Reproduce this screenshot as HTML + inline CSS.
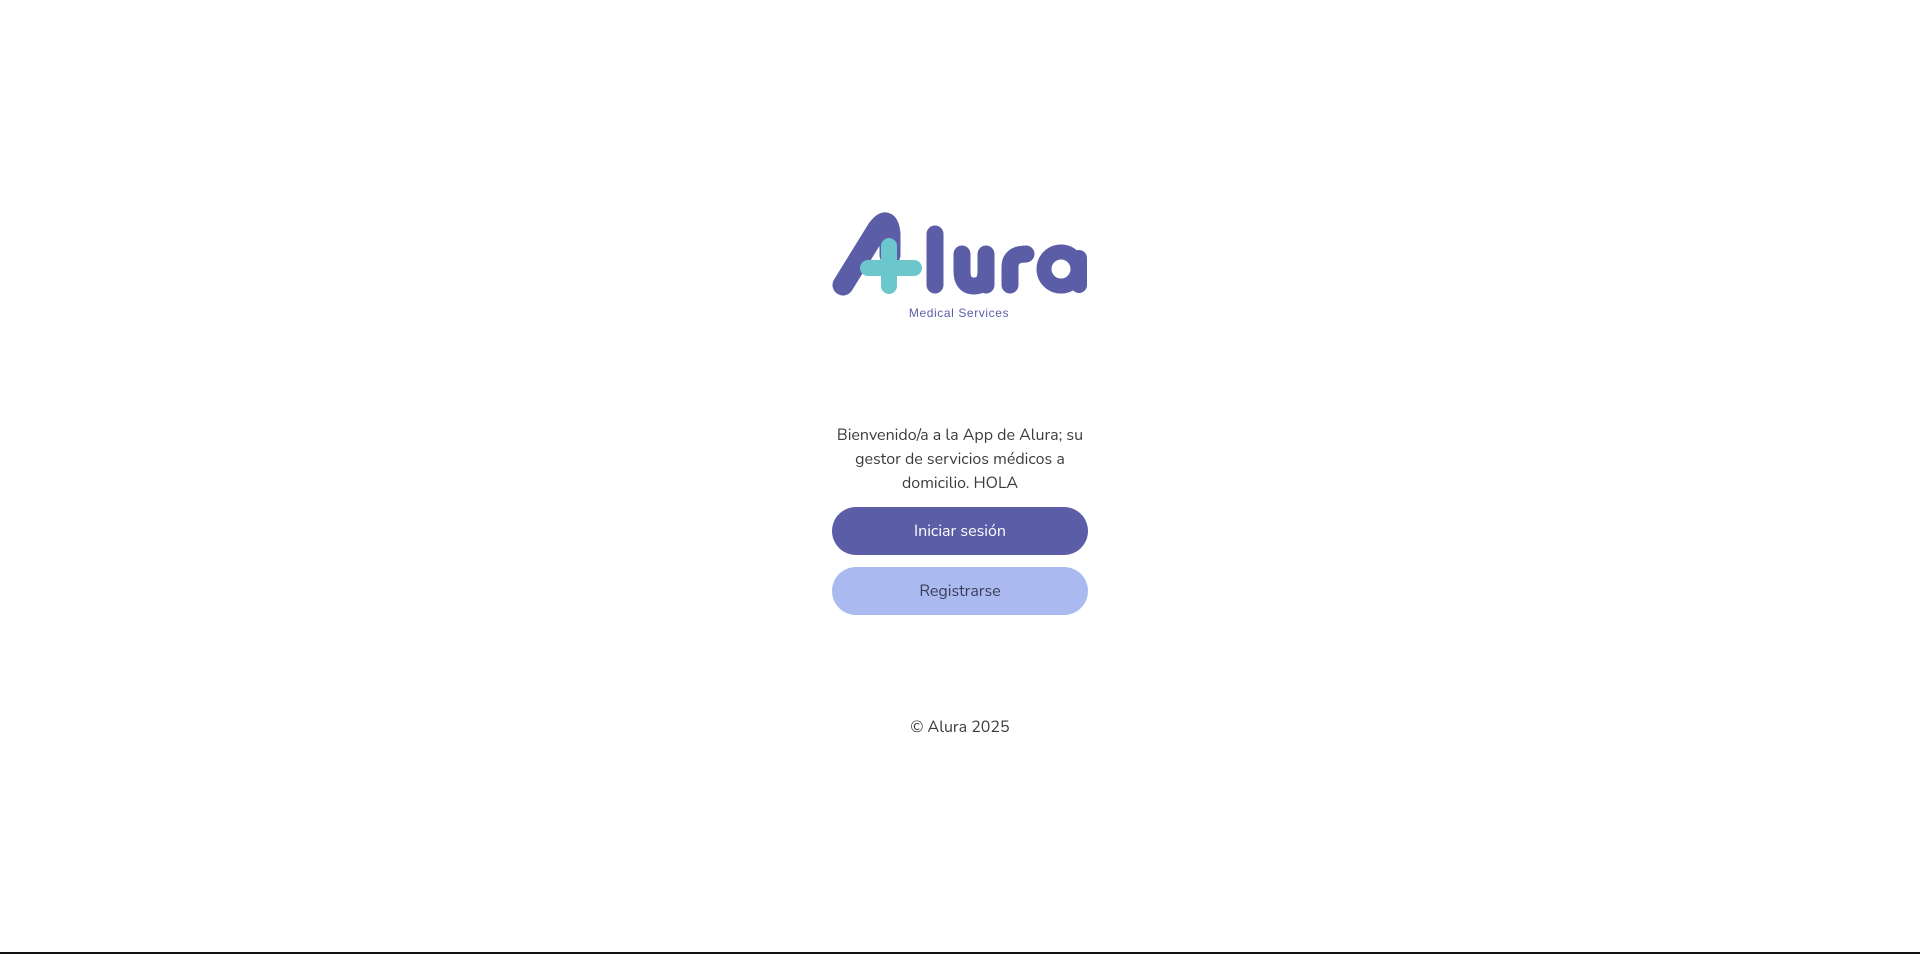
<!DOCTYPE html>
<html><head><meta charset="utf-8"><style>
html,body{margin:0;padding:0;background:#fff;}
body{width:1920px;height:954px;position:relative;overflow:hidden;font-family:"Nunito","Liberation Sans",sans-serif;color:#3a3a3a;}
.logo{position:absolute;left:0;top:0;}
.txt{position:absolute;left:832px;width:256px;top:423px;text-align:center;font-size:16px;line-height:24px;color:#3b3b3b;}
.btn{position:absolute;left:832px;width:256px;height:48px;border-radius:24px;text-align:center;line-height:48px;font-size:16px;}
.b1{top:507px;background:#5b5ea6;color:#fff;}
.b2{top:567px;background:#aab9f0;color:#3a3d55;}
.foot{position:absolute;left:832px;width:256px;top:715px;text-align:center;font-size:16px;line-height:24px;color:#3b3b3b;}
.bar{position:absolute;left:0;top:952px;width:1920px;height:2px;background:#111;}
</style></head><body>
<svg class="logo" width="1920" height="340" viewBox="0 0 1920 340">
<g fill="none" stroke="#5b5ea6" stroke-linecap="round" stroke-linejoin="round">
<path d="M843,285 L877,230 Q888,214 890,234 L890,255" stroke-width="21"/>
<path d="M935,234 L935,285" stroke-width="17"/>
<path d="M962,254 L962,271 Q962,286 974,286 Q986,286 986,271 M986,254 L986,285" stroke-width="17"/>
<path d="M1010,285 L1010,267 Q1010,254 1026,254" stroke-width="17"/>
<circle cx="1061" cy="269" r="17" stroke-width="15"/>
<path d="M1079,258 L1079,285" stroke-width="16"/>
</g>
<g stroke="#6cc7cc" stroke-linecap="round" stroke-width="16">
<path d="M868,268 L914,268"/>
<path d="M889,246 L889,286"/>
</g>
<text x="959" y="317" text-anchor="middle" font-family="Liberation Sans, sans-serif" font-size="12" fill="#5b5ea6" letter-spacing="0.6">Medical Services</text>
</svg>
<div class="txt">Bienvenido/a a la App de Alura; su gestor de servicios médicos a domicilio. HOLA</div>
<div class="btn b1">Iniciar sesión</div>
<div class="btn b2">Registrarse</div>
<div class="foot">© Alura 2025</div>
<div class="bar"></div>
</body></html>
